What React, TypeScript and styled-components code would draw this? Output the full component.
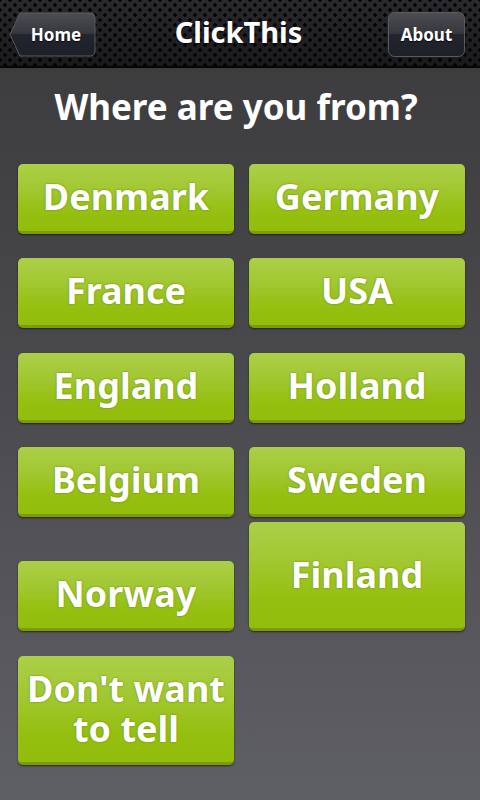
import React from "react";
import styled, { createGlobalStyle } from "styled-components";

const Global = createGlobalStyle`
  html, body { margin: 0; padding: 0; }
  body {
    width: 480px;
    height: 800px;
    overflow: hidden;
    font-family: "Noto Sans", "Open Sans", sans-serif;
    background: #3a3a3a;
  }
`;

const Screen = styled.div`
  width: 480px;
  height: 800px;
  display: flex;
  flex-direction: column;
  background: linear-gradient(180deg, #3a3a3b 0%, #4b4b4f 50%, #5f5f66 100%);
`;

const Header = styled.header`
  height: 66px;
  flex: 0 0 66px;
  border-bottom: 2px solid #050505;
  display: grid;
  grid-template-columns: 1fr auto 1fr;
  align-items: center;
  padding: 0 15px 0 9px;
  background-color: #1d1d20;
  background-image:
    radial-gradient(circle at 50% 50%, #030303 1.5px, transparent 2px),
    radial-gradient(circle at 50% 50%, #030303 1.5px, transparent 2px),
    linear-gradient(180deg, #2a2a2e 0%, #1a1a1d 100%);
  background-size: 10px 10px, 10px 10px, 100% 100%;
  background-position: 0 0, 5px 5px, 0 0;
`;

const Title = styled.h1`
  margin: 0;
  color: #ffffff;
  font-size: 29px;
  font-weight: 700;
  line-height: 1;
  padding: 0 0 4px 3px;
  text-shadow: 0 1px 2px rgba(0, 0, 0, 0.8);
`;

const NavButton = styled.button<{ $side: "left" | "right" }>`
  position: relative;
  justify-self: ${(p) => (p.$side === "left" ? "start" : "end")};
  width: ${(p) => (p.$side === "left" ? "87px" : "77px")};
  height: 45px;
  margin-top: 2px;
  padding: 0 0 0 ${(p) => (p.$side === "left" ? "7px" : "0")};
  border: none;
  background: transparent;
  color: #ffffff;
  font-family: "Noto Sans", sans-serif;
  font-weight: 700;
  font-size: 17px;
  cursor: pointer;
  text-shadow: 0 1px 1px rgba(0, 0, 0, 0.8);

  & > span {
    position: relative;
  }
  & > svg {
    position: absolute;
    inset: 0;
  }
`;

const Body = styled.main`
  flex: 1;
  display: flex;
  flex-direction: column;
`;

const Question = styled.h2`
  margin: 17px 0 0;
  text-align: center;
  color: #ffffff;
  font-size: 35px;
  line-height: 44px;
  font-weight: 700;
  padding-right: 8px;
`;

const Columns = styled.div`
  display: grid;
  grid-template-columns: 216px 216px;
  column-gap: 15px;
  padding: 0 0 0 18px;
  margin-top: 35px;
  align-items: start;
`;

const Column = styled.div`
  display: flex;
  flex-direction: column;
`;

const Choice = styled.button<{ $gap: number; $tall?: boolean }>`
  margin-top: ${(p) => p.$gap}px;
  height: ${(p) => (p.$tall ? 109 : 70)}px;
  width: 216px;
  border: none;
  border-radius: 5px;
  border-bottom: 3px solid #7a9c05;
  box-shadow: 0 1px 2px rgba(0, 0, 0, 0.55);
  background: linear-gradient(180deg, #abcf48 0%, #a2c833 35%, #96c012 70%, #92bd0a 100%);
  color: #ffffff;
  font-family: "Noto Sans", sans-serif;
  font-weight: 700;
  font-size: 36px;
  line-height: 40px;
  padding: 0 0 ${(p) => (p.$tall ? 1 : 2)}px;
  text-align: center;
  text-shadow: 0 0 2px rgba(90, 120, 0, 0.9);
  cursor: pointer;
`;

const left = [
  { label: "Denmark", gap: 0 },
  { label: "France", gap: 24 },
  { label: "England", gap: 25 },
  { label: "Belgium", gap: 24 },
  { label: "Norway", gap: 44 },
  { label: "Don't want to tell", gap: 25, tall: true },
];

const right = [
  { label: "Germany", gap: 0 },
  { label: "USA", gap: 24 },
  { label: "Holland", gap: 25 },
  { label: "Sweden", gap: 24 },
  { label: "Finland", gap: 5, tall: true },
];

const HomeShape = () => (
  <svg width="87" height="45" viewBox="0 0 87 45">
    <defs>
      <linearGradient id="nb" x1="0" y1="0" x2="0" y2="1">
        <stop offset="0" stopColor="#4c4e53" />
        <stop offset="0.48" stopColor="#35373d" />
        <stop offset="0.5" stopColor="#22242e" />
        <stop offset="1" stopColor="#1e2029" />
      </linearGradient>
    </defs>
    <path
      d="M11 1 H81 Q86 1 86 6 V39 Q86 44 81 44 H11 L1 22.5 Z"
      fill="url(#nb)"
      stroke="#5a5b60"
      strokeWidth="1"
    />
  </svg>
);

const AboutShape = () => (
  <svg width="77" height="45" viewBox="0 0 77 45">
    <defs>
      <linearGradient id="ab" x1="0" y1="0" x2="0" y2="1">
        <stop offset="0" stopColor="#4c4e53" />
        <stop offset="0.48" stopColor="#35373d" />
        <stop offset="0.5" stopColor="#22242e" />
        <stop offset="1" stopColor="#1e2029" />
      </linearGradient>
    </defs>
    <rect x="0.5" y="0.5" width="76" height="44" rx="6" fill="url(#ab)" stroke="#5a5b60" />
  </svg>
);

export default function App() {
  return (
    <>
      <Global />
      <Screen>
        <Header>
          <NavButton $side="left">
            <HomeShape />
            <span>Home</span>
          </NavButton>
          <Title>ClickThis</Title>
          <NavButton $side="right">
            <AboutShape />
            <span>About</span>
          </NavButton>
        </Header>
        <Body>
          <Question>Where are you from?</Question>
          <Columns>
            <Column>
              {left.map((b) => (
                <Choice key={b.label} $gap={b.gap} $tall={b.tall}>
                  {b.label}
                </Choice>
              ))}
            </Column>
            <Column>
              {right.map((b) => (
                <Choice key={b.label} $gap={b.gap} $tall={b.tall}>
                  {b.label}
                </Choice>
              ))}
            </Column>
          </Columns>
        </Body>
      </Screen>
    </>
  );
}
